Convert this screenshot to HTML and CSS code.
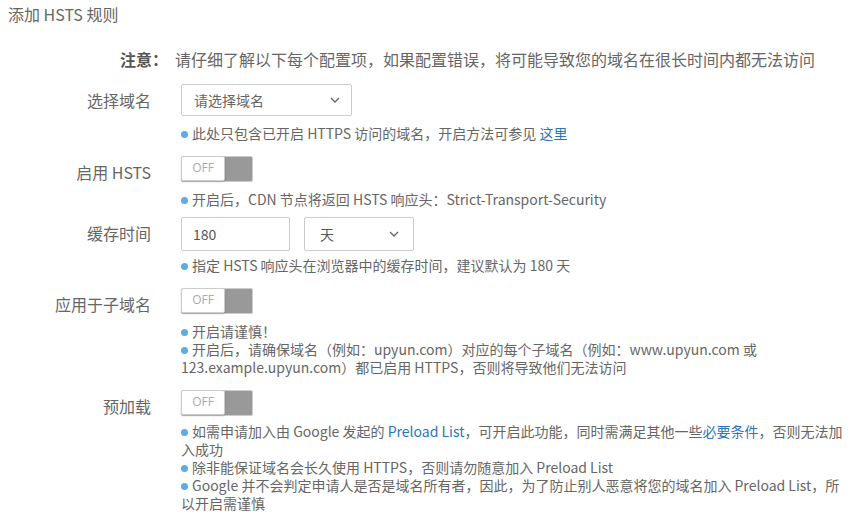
FILE: index.html
```html
<!DOCTYPE html>
<html>
<head>
  <meta charset="utf-8">
  <title>添加 HSTS 规则</title>
  <link rel="stylesheet" href="styles.css">
</head>
<body>

  <h3 class="title">添加 HSTS 规则</h3>

  <div class="notice">
    <span class="notice-label">注意：</span>
    <span class="notice-text">请仔细了解以下每个配置项，如果配置错误，将可能导致您的域名在很长时间内都无法访问</span>
  </div>

  <div class="form-row">
    <label class="form-label">选择域名</label>
    <div class="form-body">
      <div class="select select-domain">
        <span class="placeholder">请选择域名</span>
        <svg class="arrow" width="10" height="6" viewBox="0 0 10 6"><path d="M1 1l4 4 4-4" fill="none" stroke="#666" stroke-width="1.3"/></svg>
      </div>
      <ul class="hints">
        <li>此处只包含已开启 HTTPS 访问的域名，开启方法可参见 <a href="#">这里</a></li>
      </ul>
    </div>
  </div>

  <div class="form-row">
    <label class="form-label">启用 HSTS</label>
    <div class="form-body">
      <div class="toggle"><span class="knob">OFF</span></div>
      <ul class="hints">
        <li>开启后，CDN 节点将返回 HSTS 响应头：Strict-Transport-Security</li>
      </ul>
    </div>
  </div>

  <div class="form-row row-cache">
    <label class="form-label">缓存时间</label>
    <div class="form-body">
      <div class="inline">
        <input class="input" type="text" value="180">
        <div class="select select-unit">
          <span>天</span>
          <svg class="arrow" width="10" height="6" viewBox="0 0 10 6"><path d="M1 1l4 4 4-4" fill="none" stroke="#666" stroke-width="1.3"/></svg>
        </div>
      </div>
      <ul class="hints">
        <li>指定 HSTS 响应头在浏览器中的缓存时间，建议默认为 180 天</li>
      </ul>
    </div>
  </div>

  <div class="form-row">
    <label class="form-label">应用于子域名</label>
    <div class="form-body">
      <div class="toggle"><span class="knob">OFF</span></div>
      <ul class="hints">
        <li>开启请谨慎！</li>
        <li>开启后，请确保域名（例如：upyun.com）对应的每个子域名（例如：www.upyun.com 或 123.example.upyun.com）都已启用 HTTPS，否则将导致他们无法访问</li>
      </ul>
    </div>
  </div>

  <div class="form-row row-preload">
    <label class="form-label">预加载</label>
    <div class="form-body">
      <div class="toggle"><span class="knob">OFF</span></div>
      <ul class="hints">
        <li>如需申请加入由 Google 发起的 <a href="#">Preload List</a>，可开启此功能，同时需满足其他一些<a href="#">必要条件</a>，否则无法加入成功</li>
        <li>除非能保证域名会长久使用 HTTPS，否则请勿随意加入 Preload List</li>
        <li>Google 并不会判定申请人是否是域名所有者，因此，为了防止别人恶意将您的域名加入 Preload List，所以开启需谨慎</li>
      </ul>
    </div>
  </div>

</body>
</html>
```

FILE: styles.css
```css
body {
  margin: 0;
  padding: 0 0 0 8px;
  font-family: "Noto Sans CJK SC", "Noto Sans", sans-serif;
  color: #666;
  background: #fff;
}
.title {
  margin: 1px 0 0;
  font-size: 16px;
  font-weight: normal;
  line-height: 26px;
  color: #666;
}
.notice {
  display: flex;
  margin-top: 21px;
  font-size: 16px;
  line-height: 22px;
}
.notice-label {
  width: 160px;
  flex: none;
  text-align: right;
  font-weight: bold;
  color: #555;
}
.notice-text {
  margin-left: 7px;
  color: #666;
}
.form-row {
  display: flex;
  margin-top: 14px;
}
.row-cache {
  margin-top: 9px;
}
.row-cache .hints {
  margin-top: 5px;
}
.row-preload .hints {
  margin-top: 6px;
}
.form-label {
  width: 143px;
  flex: none;
  text-align: right;
  font-size: 16px;
  line-height: 26px;
  color: #666;
  padding-top: 3px;
}
.form-body {
  margin-left: 30px;
  flex: 1;
  min-width: 0;
}
.select {
  box-sizing: border-box;
  display: flex;
  align-items: center;
  justify-content: space-between;
  height: 32px;
  border: 1px solid #ccc;
  border-radius: 2px;
  padding: 0 11px 0 12px;
  font-size: 14px;
  color: #555;
}
.select-domain {
  width: 171px;
}
.select-unit {
  width: 110px;
  height: 34px;
  padding: 0 14px 0 15px;
}
.placeholder {
  color: #666;
}
.inline {
  display: flex;
  gap: 14px;
}
.input {
  box-sizing: border-box;
  width: 109px;
  height: 34px;
  border: 1px solid #ccc;
  border-radius: 2px;
  padding: 0 11px;
  font-family: inherit;
  font-size: 14px;
  color: #555;
  outline: none;
}
.toggle {
  box-sizing: border-box;
  width: 72px;
  height: 26px;
  border: 1px solid #ccc;
  border-radius: 2px;
  background: #999;
  display: flex;
}
.knob {
  box-sizing: border-box;
  width: 44px;
  height: 25px;
  margin: -1px 0 0 -1px;
  background: #fff;
  border: 1px solid #ccc;
  border-radius: 2px;
  box-shadow: 0 1px 2px rgba(0, 0, 0, 0.2);
  font-size: 12px;
  line-height: 22px;
  text-align: center;
  color: #aaa;
  font-family: "Open Sans", sans-serif;
}
.hints {
  list-style: none;
  margin: 8px 0 0;
  padding: 0;
  font-size: 14px;
  line-height: 18px;
  color: #666;
}
.hints li::before {
  content: "";
  display: inline-block;
  width: 7px;
  height: 7px;
  border-radius: 50%;
  background: #5aaee0;
  margin-right: 4px;
  vertical-align: 1px;
}
.hints a {
  color: #2a76b8;
  text-decoration: none;
}
```
